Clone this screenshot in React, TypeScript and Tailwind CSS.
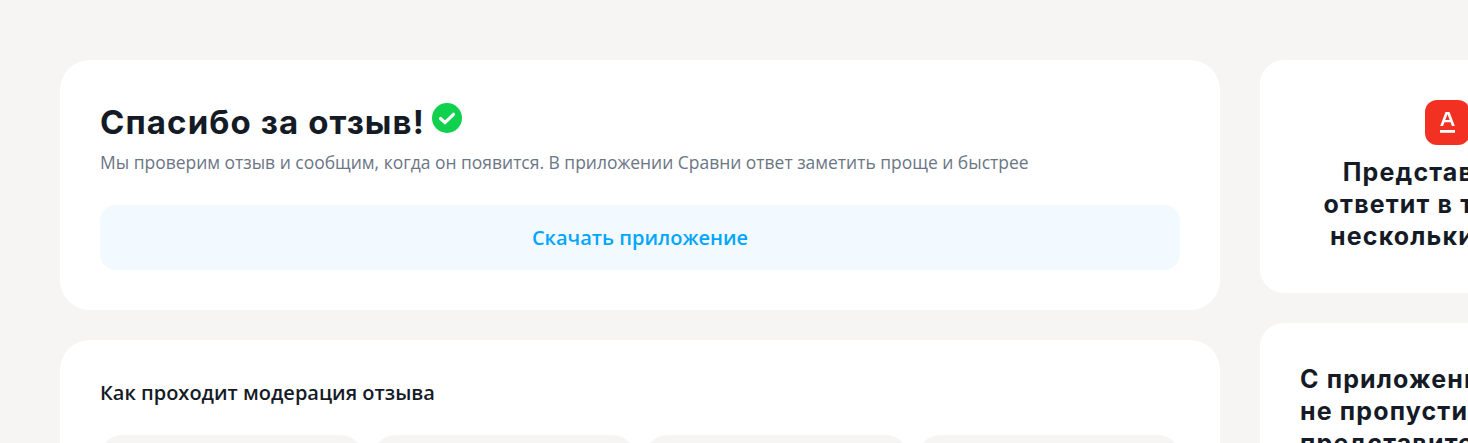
import React from 'react';

const headingFont = "font-['Inter',sans-serif]";
const bodyFont = "font-['Open_Sans',sans-serif]";

const CheckBadge = () => (
  <svg width="30" height="30" viewBox="0 0 30 30" className="shrink-0">
    <circle cx="15" cy="15" r="15" fill="#0fd14e" />
    <path d="M8.500 15.500l4.500 4.200 8.500-8.400" fill="none" stroke="#fff" strokeWidth="3.200" strokeLinecap="round" strokeLinejoin="round" />
  </svg>
);

const BankLogo = () => (
  <svg width="45" height="45" viewBox="0 0 45 45" className="shrink-0">
    <rect width="45" height="45" rx="12" fill="#f33123" />
    <path d="M15 30h15v2.800H15z" fill="#fff" />
    <path
      fillRule="evenodd"
      d="M15.200 26L20.500 12h4l5.300 14h-2.900l-1.300-3.800h-6.200L18.100 26zM20.300 20h4.400l-2.200-5.800z"
      fill="#fff"
    />
  </svg>
);

const App: React.FC = () => {
  return (
    <div className={`h-screen overflow-hidden bg-[#f6f5f3] pt-[60px] pl-[60px] flex items-start gap-10 ${bodyFont}`}>
      {/* Main column */}
      <div className="w-[1160px] shrink-0 flex flex-col gap-[30px]">
        <div className="bg-white rounded-[30px] p-10 h-[250px]">
          <div className="flex items-start gap-[7px] h-[46px]">
            <h1 className={`text-[33px] leading-[42px] mt-[1px] font-bold tracking-[1.1px] text-[#151b26] ${headingFont}`}>
              Спасибо за отзыв!
            </h1>
            <div className="mt-[3px]">
              <CheckBadge />
            </div>
          </div>
          <p className="text-[17.47px] leading-6 text-[#6b7685] mt-[4px]">
            Мы проверим отзыв и сообщим, когда он появится. В приложении Сравни ответ заметить проще и быстрее
          </p>
          <button className="mt-[31px] w-full h-[65px] rounded-[16px] bg-[#f2faff] text-[#00a6ff] text-[20px] font-semibold flex items-center justify-center">
            Скачать приложение
          </button>
        </div>

        <div className="bg-white rounded-[30px] px-10 pt-10 pb-10">
          <h2 className="text-[20px] leading-[26px] font-semibold text-[#151b26]">Как проходит модерация отзыва</h2>
          <div className="mt-[29px] grid grid-cols-4 gap-2.5">
            <div className="h-[160px] rounded-[22px] bg-[#f6f5f3]"></div>
            <div className="h-[160px] rounded-[22px] bg-[#f6f5f3]"></div>
            <div className="h-[160px] rounded-[22px] bg-[#f6f5f3]"></div>
            <div className="h-[160px] rounded-[22px] bg-[#f6f5f3]"></div>
          </div>
        </div>
      </div>

      {/* Side column */}
      <div className="w-[375px] shrink-0 flex flex-col gap-[30px]">
        <div className="bg-white rounded-[24px] h-[233px] pt-10 flex flex-col items-center">
          <BankLogo />
          <p className={`mt-[11px] text-center text-[25px] leading-[32px] font-bold tracking-[1.15px] text-[#151b26] ${headingFont}`}>
            Представитель
            <br />
            ответит в течение
            <br />
            нескольких дней
          </p>
        </div>
        <div className="bg-white rounded-[24px] px-10 pt-10 pb-10">
          <p className={`text-[25px] leading-[32px] font-bold tracking-[1.15px] text-[#151b26] ${headingFont}`}>
            С приложением
            <br />
            не пропустите
            <br />
            представителя
          </p>
        </div>
      </div>
    </div>
  );
};

export default App;
